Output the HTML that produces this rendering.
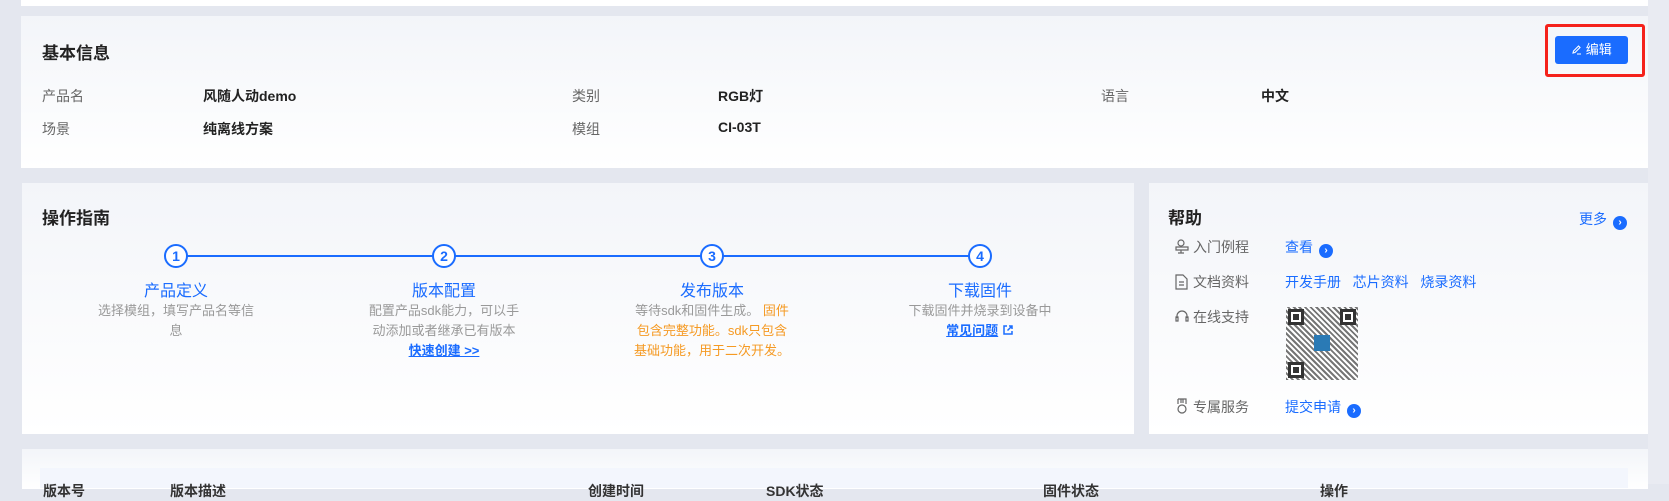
<!DOCTYPE html>
<html><head><meta charset="utf-8"><style>
*{margin:0;padding:0;box-sizing:border-box}
body{width:1669px;height:484px;overflow:hidden;background:#e4e7ef;font-family:"Liberation Sans","Noto Sans CJK SC",sans-serif;position:relative;color:#333}
.card{position:absolute;background:linear-gradient(#f3f5f9,#fff);}
.abs{position:absolute;white-space:nowrap}
.t{font-size:17px;font-weight:bold;color:#222}
.lab{font-size:14px;color:#666}
.val{font-size:14px;font-weight:bold;color:#222}
.blue{color:#1a6cff}
.st{font-size:16px;color:#1a6cff;text-align:center;width:240px}
.sd{font-size:13px;color:#999;text-align:center;width:162px;line-height:20px;white-space:normal}
.circ{position:absolute;width:24px;height:24px;border:2px solid #1a6cff;border-radius:50%;background:#fff;color:#1a6cff;font-weight:bold;font-size:14px;text-align:center;line-height:20px}
.arr{display:inline-block;width:14px;height:14px;border-radius:50%;background:#1a6cff;color:#fff;font-size:10px;line-height:14px;text-align:center;vertical-align:-1px;margin-left:6px;font-weight:bold}
.ic{position:absolute}
</style></head><body>
<div style="position:absolute;left:1648px;top:0;width:21px;height:484px;background:#e9ebf2"></div>
<div class="card" style="left:21px;top:0;width:1627px;height:6px;background:#fff"></div>

<div class="card" style="left:21px;top:16px;width:1627px;height:152px"></div>
<div class="abs t" style="left:42px;top:39px">基本信息</div>
<div class="abs lab" style="left:42px;top:86px">产品名</div>
<div class="abs val" style="left:203px;top:86px">风随人动demo</div>
<div class="abs lab" style="left:572px;top:86px">类别</div>
<div class="abs val" style="left:718px;top:86px">RGB灯</div>
<div class="abs lab" style="left:1101px;top:86px">语言</div>
<div class="abs val" style="left:1261px;top:86px">中文</div>
<div class="abs lab" style="left:42px;top:119px">场景</div>
<div class="abs val" style="left:203px;top:119px">纯离线方案</div>
<div class="abs lab" style="left:572px;top:119px">模组</div>
<div class="abs val" style="left:718px;top:119px">CI-03T</div>
<div style="position:absolute;left:1545px;top:24px;width:100px;height:53px;border:3px solid #f5221b;border-radius:3px"></div>
<div style="position:absolute;left:1555px;top:36px;width:73px;height:28px;background:#1a6cff;border-radius:3px;color:#fff;font-size:13px;text-align:center;line-height:28px">
<svg width="11" height="11" viewBox="0 0 11 11" style="vertical-align:-1px"><path d="M2 9 L2.5 7 L7.5 2 L9 3.5 L4 8.5 Z M6 10 H10" stroke="#fff" fill="none" stroke-width="1.1"/></svg> 编辑</div>

<div class="card" style="left:22px;top:183px;width:1112px;height:251px"></div>
<div class="abs t" style="left:42px;top:204px">操作指南</div>
<div style="position:absolute;left:176px;top:255px;width:804px;height:2px;background:#1a6cff"></div>
<div class="circ" style="left:164px;top:244px">1</div>
<div class="circ" style="left:432px;top:244px">2</div>
<div class="circ" style="left:700px;top:244px">3</div>
<div class="circ" style="left:968px;top:244px">4</div>
<div class="abs st" style="left:56px;top:277px">产品定义</div>
<div class="abs st" style="left:324px;top:277px">版本配置</div>
<div class="abs st" style="left:592px;top:277px">发布版本</div>
<div class="abs st" style="left:860px;top:277px">下载固件</div>
<div class="abs sd" style="left:95px;top:301px">选择模组，填写产品名等信息</div>
<div class="abs sd" style="left:363px;top:301px">配置产品sdk能力，可以手动添加或者继承已有版本<br><b style="color:#1a6cff;text-decoration:underline">快速创建 &gt;&gt;</b></div>
<div class="abs sd" style="left:631px;top:301px">等待sdk和固件生成。 <span style="color:#f59a23">固件包含完整功能。sdk只包含基础功能，用于二次开发。</span></div>
<div class="abs sd" style="left:885px;top:301px;width:190px">下载固件并烧录到设备中<br><b style="color:#1a6cff;text-decoration:underline">常见问题</b> <svg width="12" height="12" viewBox="0 0 12 12" style="vertical-align:-1px"><path d="M5 2H2V10H10V7 M7 2H10V5 M10 2L5.5 6.5" stroke="#1a6cff" stroke-width="1.5" fill="none"/></svg></div>

<div class="card" style="left:1149px;top:183px;width:499px;height:251px"></div>
<div class="abs t" style="left:1168px;top:204px">帮助</div>
<div class="abs blue" style="left:1579px;top:209px;font-size:14px">更多<span class="arr">›</span></div>

<svg class="ic" style="left:1175px;top:239px" width="14" height="16" viewBox="0 0 14 16" fill="none" stroke="#666" stroke-width="1.2"><circle cx="6" cy="4" r="3"/><path d="M1 8H13V11H1Z M6 11V14 M3 14H9"/></svg>
<div class="abs lab" style="left:1193px;top:237px">入门例程</div>
<div class="abs blue" style="left:1285px;top:237px;font-size:14px">查看<span class="arr">›</span></div>
<svg class="ic" style="left:1175px;top:274px" width="13" height="16" viewBox="0 0 13 16" fill="none" stroke="#666" stroke-width="1.2"><path d="M1 1H8L12 5V15H1Z M4 8H9 M4 11H9"/></svg>
<div class="abs lab" style="left:1193px;top:272px">文档资料</div>
<div class="abs blue" style="left:1285px;top:272px;font-size:14px">开发手册&nbsp;&nbsp;&nbsp;芯片资料&nbsp;&nbsp;&nbsp;烧录资料</div>
<svg class="ic" style="left:1175px;top:309px" width="14" height="15" viewBox="0 0 14 15" fill="none" stroke="#666" stroke-width="1.2"><path d="M2 9V7A5 5 0 0 1 12 7V9 M1 8H3V12H1Z M11 8H13V12H11Z"/></svg>
<div class="abs lab" style="left:1193px;top:307px">在线支持</div>
<div style="position:absolute;left:1286px;top:307px;width:72px;height:73px;background:repeating-linear-gradient(45deg,#555 0 2px,#fff 2px 4px),#fff;opacity:.8"></div>
<div style="position:absolute;left:1288px;top:309px;width:16px;height:16px;border:3px solid #333;background:#fff"><div style="margin:2px;width:6px;height:6px;background:#333"></div></div>
<div style="position:absolute;left:1340px;top:309px;width:16px;height:16px;border:3px solid #333;background:#fff"><div style="margin:2px;width:6px;height:6px;background:#333"></div></div>
<div style="position:absolute;left:1288px;top:362px;width:16px;height:16px;border:3px solid #333;background:#fff"><div style="margin:2px;width:6px;height:6px;background:#333"></div></div>
<div style="position:absolute;left:1314px;top:335px;width:16px;height:16px;background:#2a7ab5"></div>
<svg class="ic" style="left:1176px;top:398px" width="12" height="16" viewBox="0 0 12 16" fill="none" stroke="#666" stroke-width="1.2"><path d="M2 1H10V6 M2 1V6 M5 1V5 M7 1V5"/><circle cx="6" cy="11" r="4"/></svg>
<div class="abs lab" style="left:1193px;top:397px">专属服务</div>
<div class="abs blue" style="left:1285px;top:397px;font-size:14px">提交申请<span class="arr">›</span></div>

<div class="card" style="left:22px;top:449px;width:1626px;height:40px"></div>
<div style="position:absolute;left:40px;top:468px;width:1588px;height:20px;background:#f3f6fd"></div>
<div class="abs" style="left:43px;top:481px;font-size:14px;font-weight:bold;color:#333">版本号</div>
<div class="abs" style="left:170px;top:481px;font-size:14px;font-weight:bold;color:#333">版本描述</div>
<div class="abs" style="left:588px;top:481px;font-size:14px;font-weight:bold;color:#333">创建时间</div>
<div class="abs" style="left:766px;top:481px;font-size:14px;font-weight:bold;color:#333">SDK状态</div>
<div class="abs" style="left:1043px;top:481px;font-size:14px;font-weight:bold;color:#333">固件状态</div>
<div class="abs" style="left:1320px;top:481px;font-size:14px;font-weight:bold;color:#333">操作</div>
</body></html>
